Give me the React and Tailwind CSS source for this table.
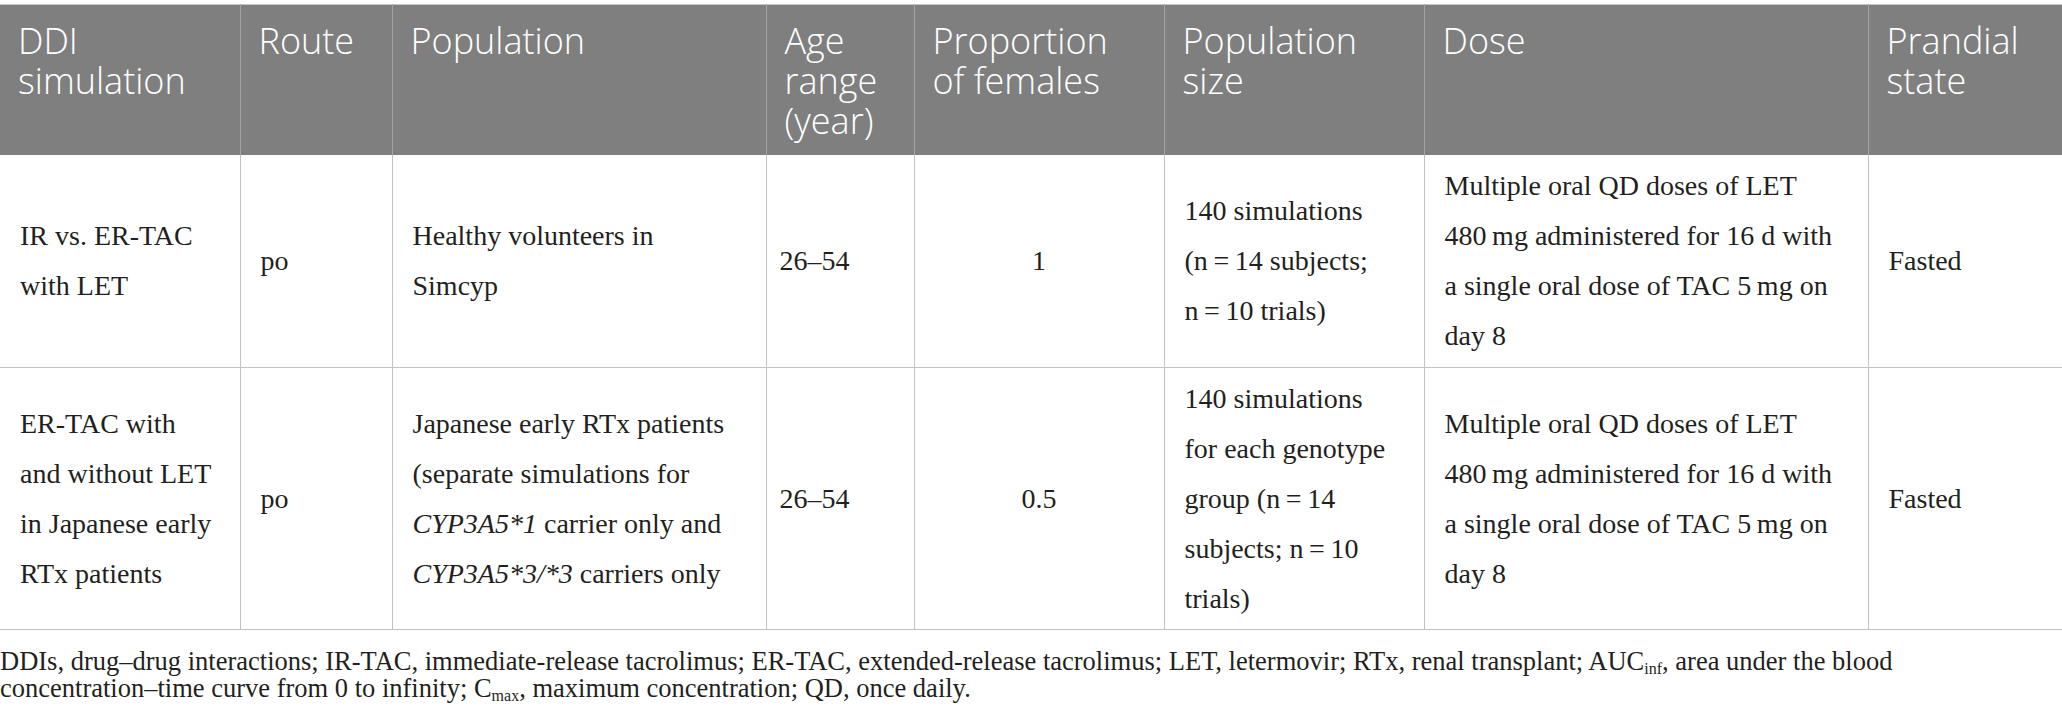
const headers = [
  ['DDI', 'simulation'],
  ['Route'],
  ['Population'],
  ['Age', 'range', '(year)'],
  ['Proportion', 'of females'],
  ['Population', 'size'],
  ['Dose'],
  ['Prandial', 'state'],
]

const colWidths = ['w-[240px]', 'w-[152px]', 'w-[374px]', 'w-[148px]', 'w-[250px]', 'w-[260px]', 'w-[444px]', 'w-[194px]']

const rows = [
  {
    h: 'h-[213px]',
    cells: [
      ['IR vs. ER-TAC', 'with LET'],
      ['po'],
      ['Healthy volunteers in', 'Simcyp'],
      ['26–54'],
      ['1'],
      ['140 simulations', '(n\u2009=\u200914 subjects;', 'n\u2009=\u200910 trials)'],
      ['Multiple oral QD doses of LET', '480\u2009mg administered for 16 d with', 'a single oral dose of TAC 5\u2009mg on', 'day 8'],
      ['Fasted'],
    ],
  },
  {
    h: 'h-[262px]',
    cells: [
      ['ER-TAC with', 'and without LET', 'in Japanese early', 'RTx patients'],
      ['po'],
      [
        'Japanese early RTx patients',
        '(separate simulations for',
        <><i>CYP3A5*1</i> carrier only and</>,
        <><i>CYP3A5*3/*3</i> carriers only</>,
      ],
      ['26–54'],
      ['0.5'],
      ['140 simulations', 'for each genotype', 'group (n\u2009=\u200914', 'subjects; n\u2009=\u200910', 'trials)'],
      ['Multiple oral QD doses of LET', '480\u2009mg administered for 16 d with', 'a single oral dose of TAC 5\u2009mg on', 'day 8'],
      ['Fasted'],
    ],
  },
]

function Lines({ lines }) {
  return lines.map((l, i) => (
    <span key={i} className="block whitespace-nowrap">{l}</span>
  ))
}

export default function App() {
  return (
    <div className="w-[2062px] min-h-screen bg-white pt-[4px]">
      <table className="w-[2062px] table-fixed border-collapse border-t border-[#c6c6c6]">
        <colgroup>
          {colWidths.map((w, i) => <col key={i} className={w} />)}
        </colgroup>
        <thead>
          <tr className="h-[150px] bg-[#7f7f7f]">
            {headers.map((h, i) => (
              <th
                key={i}
                className="align-top pt-[16px] pl-[18px] pr-2 text-left font-light text-white text-[36px] leading-[40px] border-l border-[#a3a3a3] first:border-l-0"
                style={{ fontFamily: '"Open Sans", "Noto Sans", sans-serif' }}
              >
                <Lines lines={h} />
              </th>
            ))}
          </tr>
        </thead>
        <tbody className="font-['Liberation_Serif',serif] text-[28px] leading-[50px] text-[#231f20]">
          {rows.map((r, ri) => (
            <tr key={ri} className={r.h}>
              {r.cells.map((c, ci) => (
                <td
                  key={ci}
                  className={`align-middle border-b border-l border-[#c2c2c2] first:border-l-0 ${ci === 4 ? 'text-center' : ci === 3 ? 'pl-[13px]' : 'pl-[20px]'}`}
                >
                  <Lines lines={c} />
                </td>
              ))}
            </tr>
          ))}
        </tbody>
      </table>
      <p className="mt-[18px] font-['Liberation_Serif',serif] text-[26.5px] leading-[27px] text-[#231f20]">
        DDIs, drug–drug interactions; IR-TAC, immediate-release tacrolimus; ER-TAC, extended-release tacrolimus; LET, letermovir; RTx, renal transplant; AUC<sub className="text-[16px]">inf</sub>, area under the blood{' '}
        <span className="whitespace-nowrap">concentration–time</span> curve from 0 to infinity; C<sub className="text-[16px]">max</sub>, maximum concentration; QD, once daily.
      </p>
    </div>
  )
}
